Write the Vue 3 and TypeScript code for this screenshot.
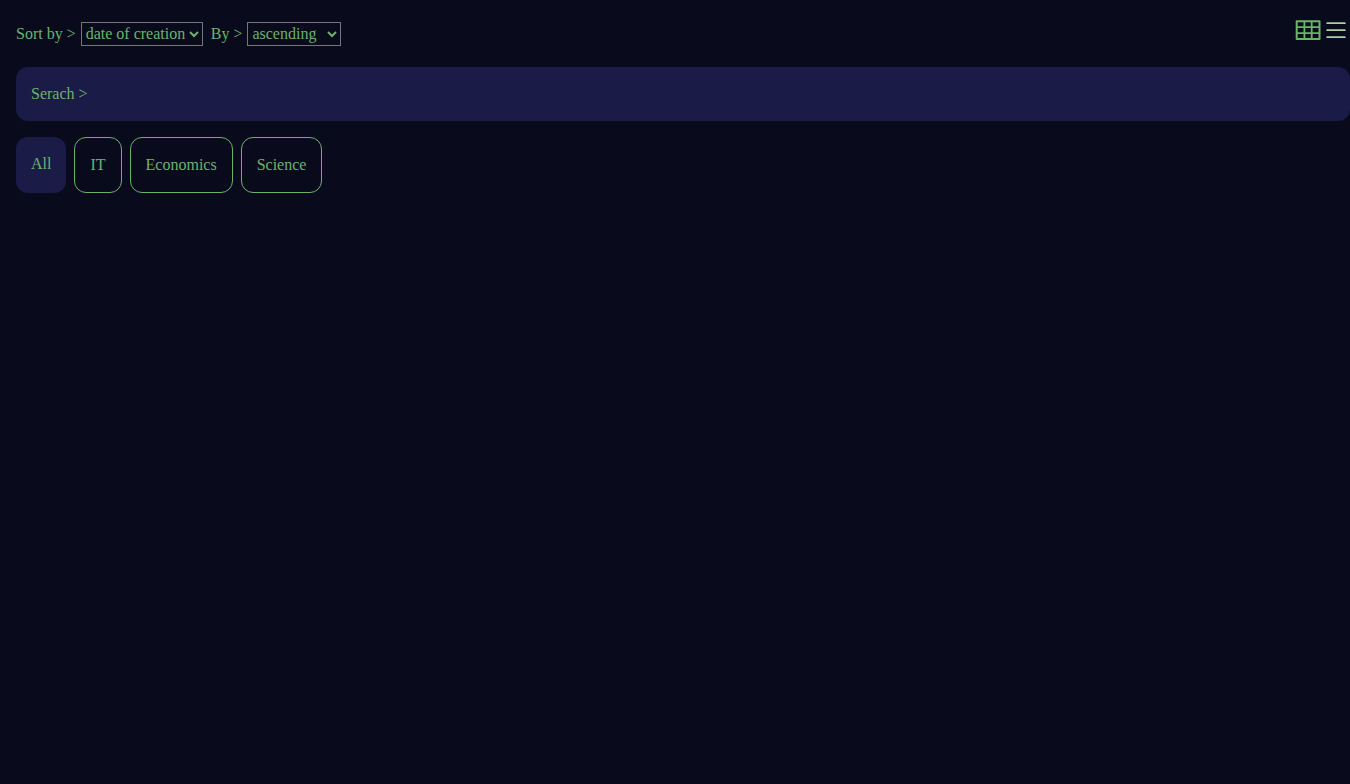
<script setup lang="ts">
import { ref } from 'vue'

const sortKey = ref('date')
const order = ref('asc')
const query = ref('')
const view = ref<'grid' | 'list'>('grid')
const categories = ['All', 'IT', 'Economics', 'Science']
const active = ref('All')
</script>

<template>
  <main class="page">
    <header class="toolbar">
      <div class="sorting">
        <label for="sort-key">Sort by &gt;</label>
        <select id="sort-key" v-model="sortKey">
          <option value="date">date of creation</option>
          <option value="title">title</option>
        </select>
        <label class="second" for="sort-order">By &gt;</label>
        <select id="sort-order" v-model="order">
          <option value="asc">ascending</option>
          <option value="desc">descending</option>
        </select>
      </div>
      <div class="views">
        <button type="button" aria-label="Grid view" :aria-pressed="view === 'grid'" @click="view = 'grid'">
          <svg width="28" height="28" viewBox="0 0 28 28" fill="none" stroke="#6ab46a">
            <rect x="2.7" y="5.2" width="22.8" height="17.8" stroke-width="2" stroke-linejoin="round" />
            <path d="M10.4 5v18M17.7 5v18M3 11.1h22M3 17.2h22" stroke-width="1.8" />
          </svg>
        </button>
        <button type="button" aria-label="List view" :aria-pressed="view === 'list'" @click="view = 'list'">
          <svg width="28" height="28" viewBox="0 0 28 28" fill="none" stroke="#add0a2" stroke-width="1.8" stroke-linecap="round">
            <path d="M5.2 7.2h17.6M5.2 14.2h17.6M5.2 21.2h17.6" />
          </svg>
        </button>
      </div>
    </header>

    <div class="search">
      <label for="search">Serach &gt;</label>
      <input id="search" v-model="query" type="text" />
    </div>

    <nav class="categories" aria-label="Categories">
      <button
        v-for="name in categories"
        :key="name"
        type="button"
        :class="{ active: name === active }"
        @click="active = name"
      >{{ name }}</button>
    </nav>
  </main>
</template>

<style>
body {
  margin: 0;
  background: #090b1d;
}
</style>

<style scoped>
.page {
  box-sizing: border-box;
  min-height: 100vh;
  padding: 16px 0 0 16px;
  color: #6ab46a;
  font-family: "Liberation Serif", "Times New Roman", serif;
  font-size: 16px;
  line-height: 24px;
}
.toolbar {
  display: flex;
  justify-content: space-between;
  align-items: flex-start;
  height: 51px;
}
.sorting {
  display: flex;
  align-items: center;
  padding-top: 6px;
}
.sorting label {
  margin-right: 5px;
}
.sorting .second {
  margin-left: 8px;
}
select {
  box-sizing: border-box;
  height: 24px;
  margin: 0;
  padding: 0 0 2px;
  border: 1px solid #767676;
  border-radius: 0;
  background: transparent;
  color: inherit;
  font: inherit;
}
option {
  background: #090b1d;
}
.views {
  display: flex;
}
.views button {
  display: flex;
  padding: 0;
  border: 0;
  background: none;
}
.search {
  display: flex;
  gap: 5px;
  padding: 15px;
  border-radius: 12px;
  background: #1a1b46;
}
.search input {
  flex: 1;
  min-width: 0;
  height: 24px;
  padding: 0;
  border: 0;
  outline: 0;
  background: transparent;
  color: inherit;
  font: inherit;
}
.categories {
  display: flex;
  flex-wrap: wrap;
  gap: 8px;
  margin-top: 16px;
}
.categories button {
  padding: 15px;
  border: 1px solid #6ab46a;
  border-radius: 12px;
  background: transparent;
  color: inherit;
  font: inherit;
  cursor: pointer;
}
.categories .active {
  padding-bottom: 17px;
  border: 0;
  background: #1a1b46;
}
</style>
